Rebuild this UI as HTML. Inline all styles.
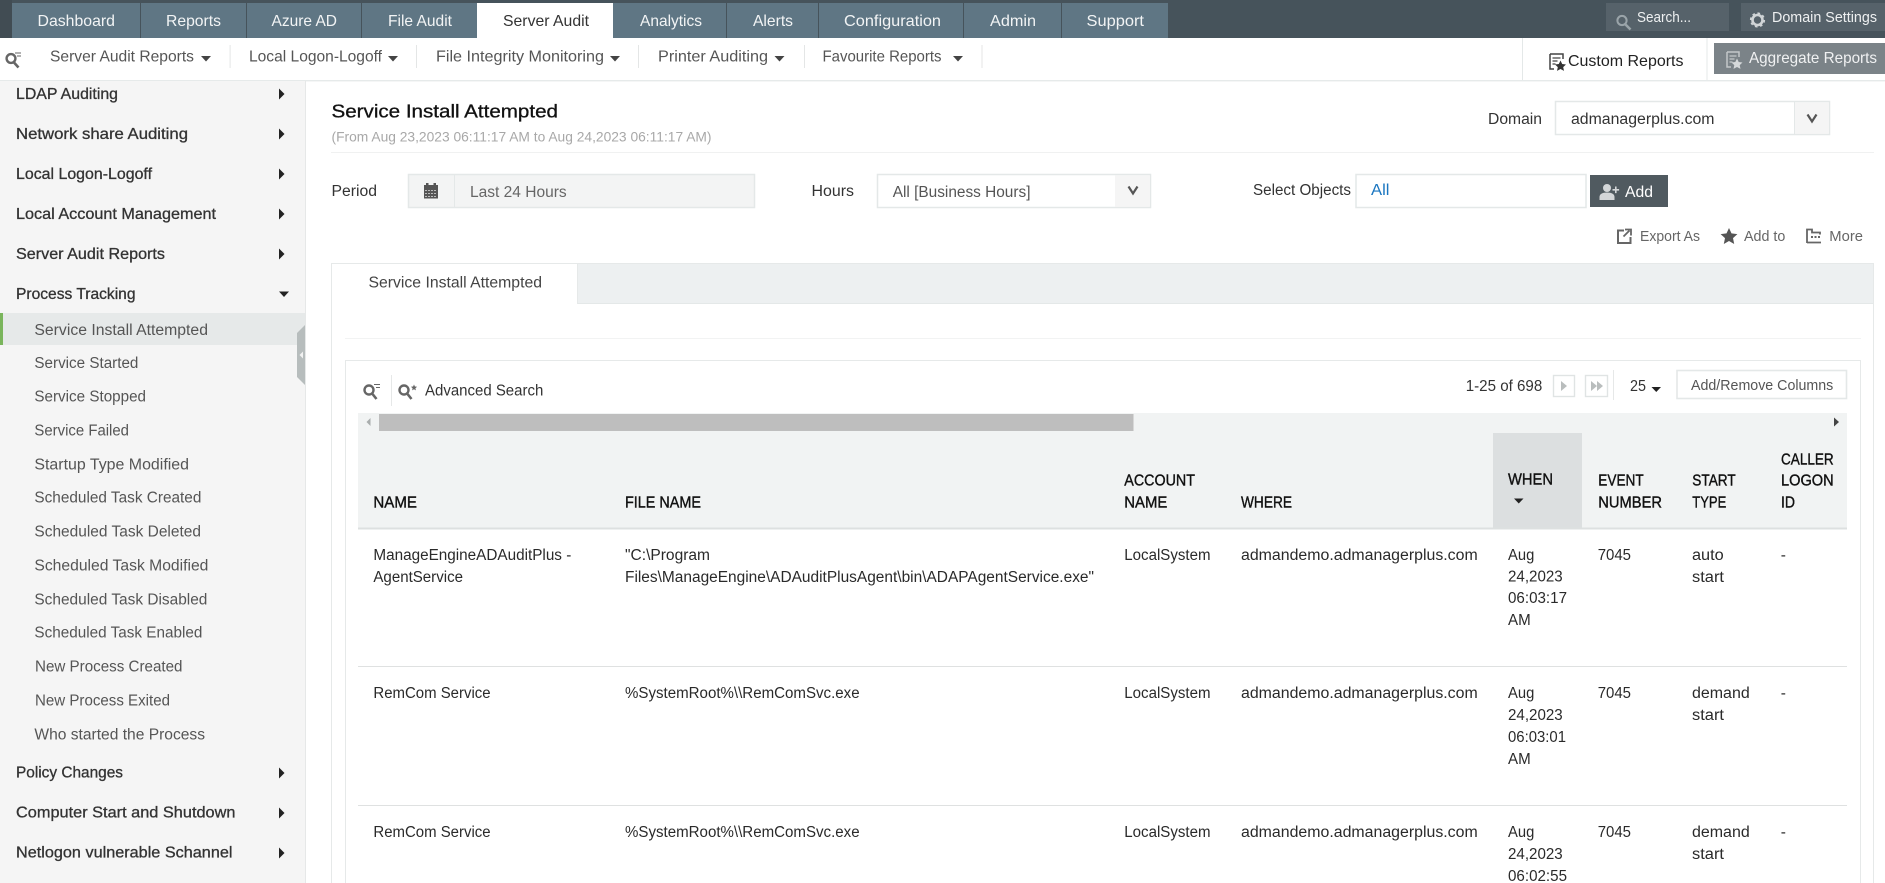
<!DOCTYPE html>
<html lang="en">
<head>
<meta charset="utf-8">
<title>Service Install Attempted</title>
<style>
html,body{margin:0;padding:0;background:#fff;width:1885px;height:883px;overflow:hidden}
svg{display:block}
text{font-family:"Liberation Sans",sans-serif;font-size:15.5px;fill:#333;white-space:pre}
.nav{fill:#f2f4f5;font-size:15.6px}
.sub{fill:#555;font-size:15.6px}
.grp{fill:#333;stroke:#333;stroke-width:.3px;font-size:15.6px}
.itm{fill:#555;font-size:15.5px}
.lbl{fill:#333;font-size:15.5px}
.th{fill:#111;stroke:#111;stroke-width:.38px;font-size:15.6px}
.td{fill:#2a2a2a;font-size:15.5px}
.act{fill:#666;font-size:14.5px}
</style>
</head>
<body>
<svg xmlns="http://www.w3.org/2000/svg" width="1885" height="883" viewBox="0 0 1885 883">
<!-- top bar -->
<rect width="1885" height="38" fill="#46535b"/>
<rect width="12" height="38" fill="#414c53"/>
<g fill="#5f7684">
<rect x="12" y="3" width="128" height="35"/><rect x="141" y="3" width="105" height="35"/><rect x="247" y="3" width="114" height="35"/><rect x="362" y="3" width="115" height="35"/>
<rect x="613" y="3" width="113" height="35"/><rect x="727" y="3" width="91" height="35"/><rect x="819" y="3" width="144" height="35"/><rect x="964" y="3" width="97" height="35"/><rect x="1062" y="3" width="106" height="35"/>
</g>
<rect x="477" y="3" width="136" height="35" fill="#fff"/>
<text class="nav" x="37.5" y="26" textLength="77.5" lengthAdjust="spacingAndGlyphs">Dashboard</text>
<text class="nav" x="166" y="26" textLength="55" lengthAdjust="spacingAndGlyphs">Reports</text>
<text class="nav" x="271.5" y="26" textLength="65.5" lengthAdjust="spacingAndGlyphs">Azure AD</text>
<text class="nav" x="388" y="26" textLength="64" lengthAdjust="spacingAndGlyphs">File Audit</text>
<text class="nav" x="503" y="26" textLength="86" lengthAdjust="spacingAndGlyphs" style="fill:#333">Server Audit</text>
<text class="nav" x="640" y="26" textLength="62" lengthAdjust="spacingAndGlyphs">Analytics</text>
<text class="nav" x="753" y="26" textLength="40" lengthAdjust="spacingAndGlyphs">Alerts</text>
<text class="nav" x="844" y="26" textLength="97" lengthAdjust="spacingAndGlyphs">Configuration</text>
<text class="nav" x="990" y="26" textLength="46" lengthAdjust="spacingAndGlyphs">Admin</text>
<text class="nav" x="1086.5" y="26" textLength="57.5" lengthAdjust="spacingAndGlyphs">Support</text>
<rect x="1606" y="3" width="123" height="28" fill="#56626a"/>
<rect x="1741" y="3" width="144" height="28" fill="#56626a"/>
<circle cx="1622" cy="20.5" r="4.6" fill="none" stroke="#9aa4a9" stroke-width="2"/>
<path d="M1625.5 24.5L1630.5 29.5" stroke="#9aa4a9" stroke-width="2.6" fill="none"/>
<text x="1637" y="22" textLength="54" lengthAdjust="spacingAndGlyphs" style="fill:#eef0f1;font-size:14.5px">Search...</text>
<circle cx="1757.5" cy="20" r="5" fill="none" stroke="#d0d4d6" stroke-width="2.6"/>
<circle cx="1757.5" cy="20" r="6.8" fill="none" stroke="#d0d4d6" stroke-width="1.6" stroke-dasharray="2.6 2.7"/>
<text x="1772" y="22" textLength="105" lengthAdjust="spacingAndGlyphs" style="fill:#eef0f1;font-size:14.5px">Domain Settings</text>

<!-- sub nav -->
<rect x="0" y="80" width="1885" height="1.4" fill="#e6eaea"/>
<g fill="none" stroke="#666">
<circle cx="11" cy="58.5" r="4.4" stroke-width="2.4"/>
<path d="M14 62.5L18.5 67.5" stroke-width="2.6"/>
<path d="M15 53h6M17 56h4" stroke-width="1"/>
</g>
<text class="sub" x="50" y="61.5" textLength="144" lengthAdjust="spacingAndGlyphs">Server Audit Reports</text>
<path d="M201 56h10l-5 5.5z" fill="#444"/>
<rect x="229.6" y="45" width="1" height="23" fill="#e4e6e6"/>
<text class="sub" x="249" y="61.5" textLength="133" lengthAdjust="spacingAndGlyphs">Local Logon-Logoff</text>
<path d="M388 56h10l-5 5.5z" fill="#444"/>
<rect x="416" y="45" width="1" height="23" fill="#e4e6e6"/>
<text class="sub" x="436" y="61.5" textLength="168" lengthAdjust="spacingAndGlyphs">File Integrity Monitoring</text>
<path d="M610 56h10l-5 5.5z" fill="#444"/>
<rect x="638" y="45" width="1" height="23" fill="#e4e6e6"/>
<text class="sub" x="658" y="61.5" textLength="110" lengthAdjust="spacingAndGlyphs">Printer Auditing</text>
<path d="M774.5 56h10l-5 5.5z" fill="#444"/>
<rect x="804" y="45" width="1" height="23" fill="#e4e6e6"/>
<text class="sub" x="822.5" y="61.5" textLength="119" lengthAdjust="spacingAndGlyphs">Favourite Reports</text>
<path d="M953 56h10l-5 5.5z" fill="#444"/>
<rect x="981.5" y="45" width="1" height="23" fill="#e4e6e6"/>
<rect x="1522" y="38" width="1" height="42" fill="#e4e8e8"/>
<rect x="1706.5" y="38" width="1" height="42" fill="#e4e8e8"/>
<g>
<path d="M1550 54h13v5M1550 54v15h4" fill="none" stroke="#444" stroke-width="1.5"/>
<path d="M1552.5 58h8M1552.5 61h5M1552.5 64h3" stroke="#444" stroke-width="1.2"/>
<path d="M1560.5 60.5l1.7 3.5 3.8.5-2.8 2.6.8 3.8-3.500-1.900-3.500 1.900.8-3.800-2.800-2.600 3.800-.5z" fill="#333"/>
</g>
<text x="1568" y="66" textLength="115.5" lengthAdjust="spacingAndGlyphs" style="font-size:15.6px;fill:#222">Custom Reports</text>
<rect x="1714" y="43" width="171" height="31" fill="#7b8388"/>
<g>
<path d="M1727 52h12v5M1727 52v15h4" fill="none" stroke="#c3c7c9" stroke-width="1.5"/>
<path d="M1729.5 56h7M1729.5 59h5M1729.5 62h3" stroke="#c3c7c9" stroke-width="1.2"/>
<path d="M1737 58.5l1.700 3.500 3.800.5-2.800 2.600.8 3.800-3.500-1.900-3.500 1.900.8-3.800-2.800-2.600 3.800-.5z" fill="#d5d8da"/>
</g>
<text x="1749" y="63" textLength="128" lengthAdjust="spacingAndGlyphs" style="font-size:15.6px;fill:#f0f1f2">Aggregate Reports</text>

<!-- sidebar -->
<rect x="0" y="81" width="305" height="802" fill="#f5f5f5"/>
<rect x="305" y="81" width="1" height="802" fill="#e6e8e8"/>
<text class="grp" x="16" y="99" textLength="102" lengthAdjust="spacingAndGlyphs">LDAP Auditing</text>
<text class="grp" x="16" y="139" textLength="172" lengthAdjust="spacingAndGlyphs">Network share Auditing</text>
<text class="grp" x="16" y="179" textLength="136" lengthAdjust="spacingAndGlyphs">Local Logon-Logoff</text>
<text class="grp" x="16" y="219" textLength="200" lengthAdjust="spacingAndGlyphs">Local Account Management</text>
<text class="grp" x="16" y="259" textLength="149" lengthAdjust="spacingAndGlyphs">Server Audit Reports</text>
<text class="grp" x="16" y="299" textLength="119.5" lengthAdjust="spacingAndGlyphs">Process Tracking</text>
<g fill="#222">
<path d="M279 88.5l5.5 5.5-5.5 5.5z"/><path d="M279 128.5l5.5 5.5-5.5 5.5z"/><path d="M279 168.5l5.5 5.5-5.5 5.5z"/><path d="M279 208.5l5.5 5.5-5.5 5.5z"/><path d="M279 248.5l5.5 5.5-5.5 5.5z"/>
<path d="M279 291.5h10l-5 5.5z"/>
<path d="M279 767.5l5.5 5.5-5.5 5.5z"/><path d="M279 807.5l5.5 5.5-5.5 5.5z"/><path d="M279 847.5l5.5 5.5-5.5 5.5z"/>
</g>
<rect x="0" y="313" width="305" height="32" fill="#e6e9e9"/>
<rect x="0" y="313" width="3" height="32" fill="#7ab55c"/>
<text class="itm" x="34.4" y="335" textLength="173.6" lengthAdjust="spacingAndGlyphs">Service Install Attempted</text>
<text class="itm" x="34.4" y="368" textLength="104" lengthAdjust="spacingAndGlyphs">Service Started</text>
<text class="itm" x="34.4" y="401.7" textLength="111.6" lengthAdjust="spacingAndGlyphs">Service Stopped</text>
<text class="itm" x="34.4" y="435.7" textLength="94.6" lengthAdjust="spacingAndGlyphs">Service Failed</text>
<text class="itm" x="34.4" y="469.7" textLength="154.6" lengthAdjust="spacingAndGlyphs">Startup Type Modified</text>
<text class="itm" x="34.4" y="502.7" textLength="167" lengthAdjust="spacingAndGlyphs">Scheduled Task Created</text>
<text class="itm" x="34.4" y="536.7" textLength="166.6" lengthAdjust="spacingAndGlyphs">Scheduled Task Deleted</text>
<text class="itm" x="34.4" y="570.7" textLength="174" lengthAdjust="spacingAndGlyphs">Scheduled Task Modified</text>
<text class="itm" x="34.4" y="604.7" textLength="173" lengthAdjust="spacingAndGlyphs">Scheduled Task Disabled</text>
<text class="itm" x="34.4" y="637.7" textLength="168" lengthAdjust="spacingAndGlyphs">Scheduled Task Enabled</text>
<text class="itm" x="35" y="671.7" textLength="147.5" lengthAdjust="spacingAndGlyphs">New Process Created</text>
<text class="itm" x="35" y="705.7" textLength="135" lengthAdjust="spacingAndGlyphs">New Process Exited</text>
<text class="itm" x="34.4" y="739.7" textLength="170.6" lengthAdjust="spacingAndGlyphs">Who started the Process</text>
<text class="grp" x="16" y="777.7" textLength="107" lengthAdjust="spacingAndGlyphs">Policy Changes</text>
<text class="grp" x="16" y="817.7" textLength="219.5" lengthAdjust="spacingAndGlyphs">Computer Start and Shutdown</text>
<text class="grp" x="16" y="857.7" textLength="216.5" lengthAdjust="spacingAndGlyphs">Netlogon vulnerable Schannel</text>
<path d="M305 325L297 333V377L305 385z" fill="#b7bdbd"/>
<path d="M303 351.5v7l-3.5-3.5z" fill="#f2f2f2"/>

<!-- title area -->
<text x="331.5" y="117.3" textLength="226.5" lengthAdjust="spacingAndGlyphs" style="font-size:18.8px;fill:#111;stroke:#111;stroke-width:.3px">Service Install Attempted</text>
<text x="331.5" y="141.7" textLength="380" lengthAdjust="spacingAndGlyphs" style="font-size:14px;fill:#a8a8a8">(From Aug 23,2023 06:11:17 AM to Aug 24,2023 06:11:17 AM)</text>
<rect x="331" y="152" width="1543" height="1" fill="#f0f1f1"/>
<text class="lbl" x="1488" y="124" textLength="54" lengthAdjust="spacingAndGlyphs">Domain</text>
<rect x="1555.5" y="101.5" width="274" height="33" fill="#fff" stroke="#e4e8e8" stroke-width="1.5"/>
<rect x="1794" y="102.5" width="35" height="31" fill="#f5f5f5"/>
<rect x="1794" y="102" width="1" height="32" fill="#e4e8e8"/>
<path d="M1807.5 114.5l4.5 7 4.5-7" fill="none" stroke="#555" stroke-width="2.2"/>
<text class="lbl" x="1571" y="124" textLength="143.5" lengthAdjust="spacingAndGlyphs">admanagerplus.com</text>

<!-- filters -->
<text class="lbl" x="331.5" y="196" textLength="45.5" lengthAdjust="spacingAndGlyphs">Period</text>
<rect x="408.5" y="174.5" width="346" height="33" fill="#f3f4f4" stroke="#e4e8e8" stroke-width="1.5"/>
<rect x="454" y="175" width="1" height="32" fill="#e4e8e8"/>
<g>
<rect x="424" y="185" width="14" height="13.5" fill="#555"/>
<rect x="426" y="183" width="2.5" height="3.5" fill="#555"/><rect x="433.5" y="183" width="2.5" height="3.5" fill="#555"/>
<path d="M425 190.5h12M425 193.5h12M425 196.5h12" stroke="#bbb" stroke-width="1" stroke-dasharray="2 1"/>
</g>
<text x="470" y="197" textLength="96.7" lengthAdjust="spacingAndGlyphs" style="fill:#666">Last 24 Hours</text>
<text class="lbl" x="811.5" y="196" textLength="42.5" lengthAdjust="spacingAndGlyphs">Hours</text>
<rect x="877.5" y="174.5" width="273" height="33" fill="#fff" stroke="#e4e8e8" stroke-width="1.5"/>
<rect x="1115" y="175.5" width="35" height="31" fill="#f5f5f5"/>
<path d="M1128.5 186.500l4.500 7 4.500-7" fill="none" stroke="#555" stroke-width="2.2"/>
<text x="892.7" y="197" textLength="137.8" lengthAdjust="spacingAndGlyphs" style="fill:#555">All [Business Hours]</text>
<text class="lbl" x="1253" y="195" textLength="98" lengthAdjust="spacingAndGlyphs">Select Objects</text>
<rect x="1356" y="174.5" width="230" height="33" fill="#fff" stroke="#e4e8e8" stroke-width="1.5"/>
<text x="1371" y="195" textLength="18.5" lengthAdjust="spacingAndGlyphs" style="fill:#1a76c0">All</text>
<rect x="1590" y="175" width="78" height="32" fill="#505a60"/>
<g fill="#d3d6d8">
<circle cx="1607" cy="188" r="4"/>
<path d="M1599.5 200v-3c0-3 3-4.5 7.5-4.5s7.5 1.5 7.5 4.5v3z"/>
<path d="M1615 186.500h1.600v2.500h2.500v1.600h-2.500v2.500H1615v-2.500h-2.500V189h2.500z"/>
</g>
<text x="1625" y="197" textLength="28" lengthAdjust="spacingAndGlyphs" style="fill:#fff">Add</text>

<!-- actions -->
<path d="M1624 230.5h-6v12.5h12.5v-6" fill="none" stroke="#666" stroke-width="2"/>
<path d="M1623.5 236.5l6-6M1625 229.5h6v6" fill="none" stroke="#666" stroke-width="1.8"/>
<text class="act" x="1640" y="241" textLength="60" lengthAdjust="spacingAndGlyphs">Export As</text>
<path d="M1729 228l2.5 5.4 5.900.7-4.400 4 1.200 5.900-5.200-3-5.200 3 1.200-5.900-4.400-4 5.900-.7z" fill="#555"/>
<text class="act" x="1744" y="241" textLength="41.3" lengthAdjust="spacingAndGlyphs">Add to</text>
<path d="M1807 243v-13.5h5v3h8v2M1807 242.5h14" fill="none" stroke="#666" stroke-width="1.8"/>
<path d="M1811 237h2M1814.5 237h2M1818 237h2" stroke="#666" stroke-width="2"/>
<text class="act" x="1829.3" y="241" textLength="33.7" lengthAdjust="spacingAndGlyphs">More</text>

<!-- tab panel -->
<rect x="331.5" y="263.5" width="1542" height="630" fill="#fff" stroke="#e6e9e9"/>
<rect x="332" y="264" width="1541" height="39" fill="#edf0f1"/>
<rect x="332" y="303" width="1541" height="1" fill="#e4e8e8"/>
<rect x="332" y="264" width="245.5" height="40" fill="#fff"/>
<rect x="577" y="264" width="1" height="40" fill="#e6e9e9"/>
<text x="368.5" y="287.3" textLength="173.5" lengthAdjust="spacingAndGlyphs" style="fill:#444">Service Install Attempted</text>
<rect x="345" y="338" width="1516" height="1" fill="#f2f3f3"/>
<rect x="345.5" y="360.5" width="1515" height="540" fill="#fff" stroke="#e6e9e9"/>

<!-- toolbar -->
<g fill="none" stroke="#666">
<circle cx="369" cy="390" r="4.5" stroke-width="2.4"/>
<path d="M372.5 394l4 5" stroke-width="2.6"/>
<path d="M374 384.5h6M376 387.5h4" stroke-width="1"/>
<circle cx="404" cy="390" r="4.5" stroke-width="2.4"/>
<path d="M407.5 394l4 5" stroke-width="2.6"/>
</g>
<path d="M414 384.5l.9 2 2.2.2-1.7 1.5.5 2.2-1.900-1.100-1.900 1.100.5-2.200-1.700-1.500 2.200-.2z" fill="#666"/>
<rect x="391" y="375" width="1" height="31" fill="#e6e8e8"/>
<text x="425" y="395.7" textLength="118.3" lengthAdjust="spacingAndGlyphs" style="fill:#333">Advanced Search</text>
<text x="1465.7" y="391" textLength="76.6" lengthAdjust="spacingAndGlyphs" style="fill:#333">1-25 of 698</text>
<rect x="1553.5" y="375.5" width="21" height="21" fill="#fff" stroke="#e0e4e4" stroke-width="1.4"/>
<path d="M1561 381v10l6-5z" fill="#b9bdbd"/>
<rect x="1585.5" y="375.5" width="22" height="21" fill="#fff" stroke="#e0e4e4" stroke-width="1.4"/>
<path d="M1591 381v10l6-5zM1597 381v10l6-5z" fill="#b9bdbd"/>
<rect x="1613" y="370" width="1" height="30" fill="#e6e8e8"/>
<text x="1630" y="391" textLength="16" lengthAdjust="spacingAndGlyphs" style="fill:#333">25</text>
<path d="M1651.5 387h9.500l-4.750 5z" fill="#222"/>
<rect x="1677" y="370.5" width="169.5" height="28" fill="#fff" stroke="#e4e8e8" stroke-width="1.6"/>
<text x="1691" y="390" textLength="142.3" lengthAdjust="spacingAndGlyphs" style="fill:#555;font-size:14.5px">Add/Remove Columns</text>

<!-- table header -->
<rect x="358" y="413" width="1489" height="114.5" fill="#f1f3f3"/>
<rect x="1493" y="433" width="89" height="94.5" fill="#dcdfe0"/>
<rect x="358" y="527.5" width="1489" height="2" fill="#dde0e0"/>
<rect x="379" y="414" width="754.5" height="17" fill="#bebebe"/>
<path d="M370.5 418v8l-4-4z" fill="#a9adad"/>
<path d="M1834 417.5v9l5-4.5z" fill="#444"/>
<text class="th" x="373.4" y="507.3" textLength="43.6" lengthAdjust="spacingAndGlyphs">NAME</text>
<text class="th" x="625" y="507.3" textLength="76" lengthAdjust="spacingAndGlyphs">FILE NAME</text>
<text class="th" x="1124.3" y="485.3" textLength="70.7" lengthAdjust="spacingAndGlyphs">ACCOUNT</text>
<text class="th" x="1124.3" y="507.3" textLength="43" lengthAdjust="spacingAndGlyphs">NAME</text>
<text class="th" x="1241" y="507.3" textLength="51" lengthAdjust="spacingAndGlyphs">WHERE</text>
<text class="th" x="1508" y="484.3" textLength="45" lengthAdjust="spacingAndGlyphs">WHEN</text>
<path d="M1514 498.5h9.5l-4.75 5z" fill="#222"/>
<text class="th" x="1598.3" y="485.3" textLength="45.4" lengthAdjust="spacingAndGlyphs">EVENT</text>
<text class="th" x="1598.3" y="507.3" textLength="63.7" lengthAdjust="spacingAndGlyphs">NUMBER</text>
<text class="th" x="1692.3" y="485.3" textLength="43.4" lengthAdjust="spacingAndGlyphs">START</text>
<text class="th" x="1692.3" y="507.3" textLength="34" lengthAdjust="spacingAndGlyphs">TYPE</text>
<text class="th" x="1781" y="464.3" textLength="52.7" lengthAdjust="spacingAndGlyphs">CALLER</text>
<text class="th" x="1781" y="485.3" textLength="52.7" lengthAdjust="spacingAndGlyphs">LOGON</text>
<text class="th" x="1781" y="507.3" textLength="14" lengthAdjust="spacingAndGlyphs">ID</text>

<!-- row 1 -->
<text class="td" x="373.4" y="560" textLength="197.9" lengthAdjust="spacingAndGlyphs">ManageEngineADAuditPlus -</text>
<text class="td" x="373.4" y="582" textLength="89.6" lengthAdjust="spacingAndGlyphs">AgentService</text>
<text class="td" x="625" y="560" textLength="85" lengthAdjust="spacingAndGlyphs">"C:\Program</text>
<text class="td" x="625" y="582" textLength="469" lengthAdjust="spacingAndGlyphs">Files\ManageEngine\ADAuditPlusAgent\bin\ADAPAgentService.exe"</text>
<text class="td" x="1124.3" y="560" textLength="86.2" lengthAdjust="spacingAndGlyphs">LocalSystem</text>
<text class="td" x="1241" y="560" textLength="236.7" lengthAdjust="spacingAndGlyphs">admandemo.admanagerplus.com</text>
<text class="td" x="1508" y="560" textLength="26.3" lengthAdjust="spacingAndGlyphs">Aug</text>
<text class="td" x="1508" y="581.7" textLength="54.7" lengthAdjust="spacingAndGlyphs">24,2023</text>
<text class="td" x="1508" y="603" textLength="59" lengthAdjust="spacingAndGlyphs">06:03:17</text>
<text class="td" x="1508" y="625" textLength="22.7" lengthAdjust="spacingAndGlyphs">AM</text>
<text class="td" x="1597.7" y="560" textLength="33.3" lengthAdjust="spacingAndGlyphs">7045</text>
<text class="td" x="1692" y="560" textLength="31.7" lengthAdjust="spacingAndGlyphs">auto</text>
<text class="td" x="1692" y="582" textLength="32" lengthAdjust="spacingAndGlyphs">start</text>
<text class="td" x="1780.7" y="560">-</text>
<rect x="358" y="666" width="1489" height="1" fill="#dfe1e1"/>

<!-- row 2 -->
<text class="td" x="373.4" y="698" textLength="117.2" lengthAdjust="spacingAndGlyphs">RemCom Service</text>
<text class="td" x="625" y="698" textLength="234.6" lengthAdjust="spacingAndGlyphs">%SystemRoot%\\RemComSvc.exe</text>
<text class="td" x="1124.3" y="698" textLength="86.2" lengthAdjust="spacingAndGlyphs">LocalSystem</text>
<text class="td" x="1241" y="698" textLength="236.7" lengthAdjust="spacingAndGlyphs">admandemo.admanagerplus.com</text>
<text class="td" x="1508" y="698" textLength="26.3" lengthAdjust="spacingAndGlyphs">Aug</text>
<text class="td" x="1508" y="720" textLength="54.7" lengthAdjust="spacingAndGlyphs">24,2023</text>
<text class="td" x="1508" y="742" textLength="58" lengthAdjust="spacingAndGlyphs">06:03:01</text>
<text class="td" x="1508" y="764" textLength="22.7" lengthAdjust="spacingAndGlyphs">AM</text>
<text class="td" x="1597.7" y="698" textLength="33.3" lengthAdjust="spacingAndGlyphs">7045</text>
<text class="td" x="1692" y="698" textLength="57.7" lengthAdjust="spacingAndGlyphs">demand</text>
<text class="td" x="1692" y="720" textLength="32" lengthAdjust="spacingAndGlyphs">start</text>
<text class="td" x="1780.7" y="698">-</text>
<rect x="358" y="805" width="1489" height="1" fill="#dfe1e1"/>

<!-- row 3 -->
<text class="td" x="373.4" y="837" textLength="117.2" lengthAdjust="spacingAndGlyphs">RemCom Service</text>
<text class="td" x="625" y="837" textLength="234.6" lengthAdjust="spacingAndGlyphs">%SystemRoot%\\RemComSvc.exe</text>
<text class="td" x="1124.3" y="837" textLength="86.2" lengthAdjust="spacingAndGlyphs">LocalSystem</text>
<text class="td" x="1241" y="837" textLength="236.7" lengthAdjust="spacingAndGlyphs">admandemo.admanagerplus.com</text>
<text class="td" x="1508" y="837" textLength="26.3" lengthAdjust="spacingAndGlyphs">Aug</text>
<text class="td" x="1508" y="859" textLength="54.7" lengthAdjust="spacingAndGlyphs">24,2023</text>
<text class="td" x="1508" y="881" textLength="59" lengthAdjust="spacingAndGlyphs">06:02:55</text>
<text class="td" x="1597.7" y="837" textLength="33.3" lengthAdjust="spacingAndGlyphs">7045</text>
<text class="td" x="1692" y="837" textLength="57.7" lengthAdjust="spacingAndGlyphs">demand</text>
<text class="td" x="1692" y="859" textLength="32" lengthAdjust="spacingAndGlyphs">start</text>
<text class="td" x="1780.7" y="837">-</text>
</svg>
</body>
</html>
